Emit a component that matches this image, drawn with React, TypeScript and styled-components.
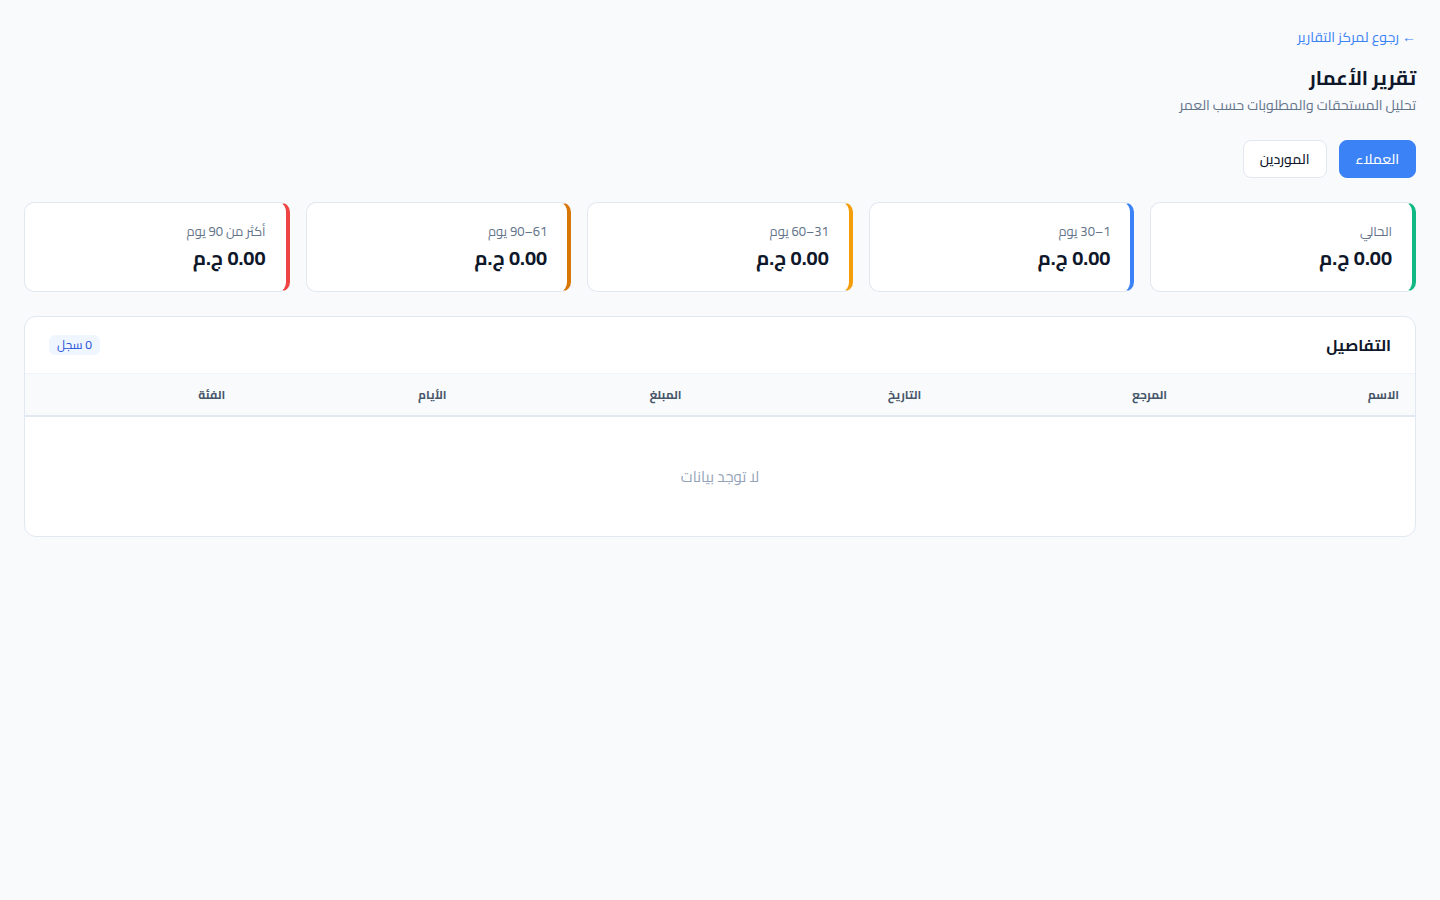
import React from "react";
import styled, { createGlobalStyle } from "styled-components";

const Global = createGlobalStyle`
  html, body { margin: 0; padding: 0; background: #f8fafc; }
  body { font-family: "Cairo", "Noto Sans", sans-serif; color: #0f172a; }
  * { box-sizing: border-box; }
`;

const Page = styled.div`
  direction: rtl;
  min-height: 900px;
  padding: 24px;
  display: flex;
  flex-direction: column;
  align-items: stretch;
`;

const BackLink = styled.a`
  align-self: flex-start;
  font-size: 14px;
  color: #3b82f6;
  text-decoration: none;
  line-height: 26px;
`;

const Title = styled.h1`
  margin: 13px 0 0;
  font-size: 20px;
  font-weight: 700;
  line-height: 30px;
  color: #0f172a;
`;

const Subtitle = styled.p`
  margin: 0;
  font-size: 14px;
  line-height: 24px;
  color: #64748b;
`;

const Tabs = styled.div`
  display: flex;
  gap: 12px;
  margin-top: 23px;
`;

const TabButton = styled.button<{ $active?: boolean }>`
  height: 38px;
  padding: 0 16px;
  border-radius: 8px;
  font-family: inherit;
  font-size: 14px;
  font-weight: 500;
  cursor: pointer;
  border: 1px solid ${(p) => (p.$active ? "#3b82f6" : "#e2e8f0")};
  background: ${(p) => (p.$active ? "#3b82f6" : "#ffffff")};
  color: ${(p) => (p.$active ? "#ffffff" : "#0f172a")};
`;

const Cards = styled.div`
  display: grid;
  grid-template-columns: repeat(5, 1fr);
  gap: 16px;
  margin-top: 24px;
`;

const Card = styled.div<{ $accent: string }>`
  background: #ffffff;
  border: 1px solid #e2e8f0;
  border-right: 4px solid ${(p) => p.$accent};
  border-radius: 10px;
  height: 90px;
  padding: 18px 20px 0;
  display: flex;
  flex-direction: column;
`;

const CardLabel = styled.div`
  font-size: 13px;
  color: #64748b;
  line-height: 20px;
`;

const CardValue = styled.div`
  font-size: 20px;
  font-weight: 700;
  color: #0f172a;
  line-height: 30px;
  margin-top: 2px;
`;

const Panel = styled.div`
  margin-top: 24px;
  background: #ffffff;
  border: 1px solid #e2e8f0;
  border-radius: 12px;
  overflow: hidden;
`;

const PanelHeader = styled.div`
  height: 56px;
  padding: 0 24px;
  display: flex;
  align-items: center;
  justify-content: space-between;
`;

const PanelTitle = styled.h2`
  margin: 0;
  font-size: 16px;
  font-weight: 700;
  color: #0f172a;
`;

const Badge = styled.span`
  background: #eff6ff;
  color: #1d4ed8;
  font-size: 12px;
  border-radius: 6px;
  padding: 0 8px;
  line-height: 20px;
`;

const Table = styled.table`
  width: 100%;
  border-collapse: collapse;
`;

const Th = styled.th`
  text-align: right;
  padding: 0 16px;
  height: 42px;
  background: #f8fafc;
  border-top: 1px solid #f1f5f9;
  border-bottom: 2px solid #e2e8f0;
  font-size: 12px;
  font-weight: 700;
  color: #475569;
`;

const EmptyCell = styled.td`
  text-align: center;
  height: 120px;
  font-size: 15px;
  color: #94a3b8;
`;

const cards = [
  { label: "الحالي", accent: "#10b981" },
  { label: "1–30 يوم", accent: "#3b82f6" },
  { label: "31–60 يوم", accent: "#f59e0b" },
  { label: "61–90 يوم", accent: "#d97706" },
  { label: "أكثر من 90 يوم", accent: "#ef4444" },
];

const columns = ["الاسم", "المرجع", "التاريخ", "المبلغ", "الأيام", "الفئة"];

export default function App() {
  return (
    <>
      <Global />
      <Page>
        <BackLink href="#">← رجوع لمركز التقارير</BackLink>
        <Title>تقرير الأعمار</Title>
        <Subtitle>تحليل المستحقات والمطلوبات حسب العمر</Subtitle>
        <Tabs>
          <TabButton $active>العملاء</TabButton>
          <TabButton>الموردين</TabButton>
        </Tabs>
        <Cards>
          {cards.map((c) => (
            <Card key={c.label} $accent={c.accent}>
              <CardLabel>{c.label}</CardLabel>
              <CardValue>0.00 ج.م</CardValue>
            </Card>
          ))}
        </Cards>
        <Panel>
          <PanelHeader>
            <PanelTitle>التفاصيل</PanelTitle>
            <Badge>0 سجل</Badge>
          </PanelHeader>
          <Table>
            <thead>
              <tr>
                {columns.map((c) => (
                  <Th key={c}>{c}</Th>
                ))}
              </tr>
            </thead>
            <tbody>
              <tr>
                <EmptyCell colSpan={6}>لا توجد بيانات</EmptyCell>
              </tr>
            </tbody>
          </Table>
        </Panel>
      </Page>
    </>
  );
}
